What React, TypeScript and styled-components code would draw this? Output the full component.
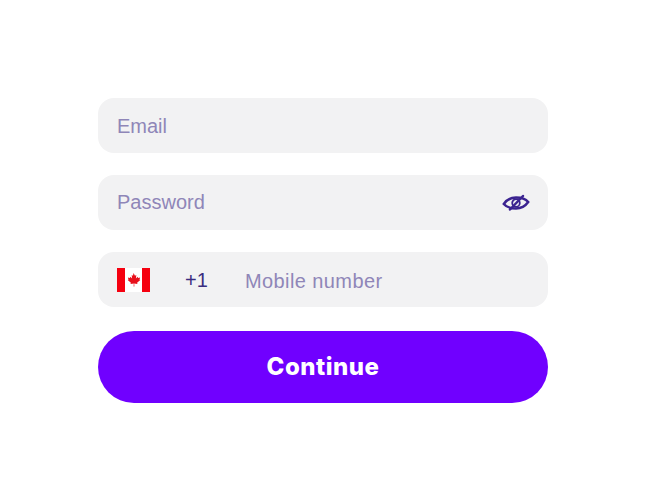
import React from "react";
import styled, { createGlobalStyle } from "styled-components";

const Global = createGlobalStyle`
  html, body { margin: 0; padding: 0; background: #fff; }
  body { font-family: "Liberation Sans", Arial, sans-serif; }
`;

const Page = styled.main`
  width: 648px;
  height: 500px;
  padding: 98px 100px 0 98px;
  box-sizing: border-box;
`;

const Form = styled.form`
  display: flex;
  flex-direction: column;
  width: 450px;
`;

const Field = styled.div<{ $gap?: number }>`
  display: flex;
  align-items: center;
  height: 55px;
  margin-bottom: ${(p) => p.$gap ?? 22}px;
  padding: 0 18px 0 19px;
  background: #f2f2f3;
  border-radius: 16px;
  box-sizing: border-box;
`;

const Input = styled.input<{ $spacing?: number; $drop?: number }>`
  flex: 1;
  min-width: 0;
  padding: ${(p) => p.$drop ?? 1}px 0 0;
  border: 0;
  outline: 0;
  background: transparent;
  font: 400 20px "Liberation Sans", Arial, sans-serif;
  letter-spacing: ${(p) => p.$spacing ?? 0}px;
  color: #2d1a78;
  &::placeholder { color: #8f86b8; opacity: 1; }
`;

const Dial = styled.span`
  width: 60px;
  margin-left: 35px;
  padding-top: 2px;
  font-size: 20px;
  color: #3a2d80;
`;

const FlagIcon = styled.svg`
  display: block;
  flex: none;
  width: 33px;
  height: 24px;
`;

const EyeIcon = styled.svg`
  display: block;
  flex: none;
  width: 28px;
  height: 20px;
`;

const Submit = styled.button`
  height: 72px;
  padding: 0 0 2px;
  border: 0;
  border-radius: 36px;
  background: #7000ff;
  color: #fff;
  font: 800 24px Inter, "Liberation Sans", sans-serif;
  letter-spacing: 0.5px;
  cursor: pointer;
`;

const Flag = () => (
  <FlagIcon viewBox="0 0 33 24" aria-label="Canada">
    <rect width="33" height="24" fill="#fff" />
    <rect width="8" height="24" fill="#f5000f" />
    <rect x="25" width="8" height="24" fill="#f5000f" />
    <path
      fill="#e8101c"
      d="M16.500 5l1.500 2.700 1.300-.6-.4 3.300 1.700-1.700.5 1.200 2-.3-.6 2.100.8.400-3.200 2.700.4 1.300-3.300-.5.200 2.900h-.8l.2-2.900-3.300.5.4-1.300-3.200-2.700.8-.4-.6-2.100 2 .3.5-1.200 1.700 1.700-.4-3.300 1.300.6z"
    />
  </FlagIcon>
);

const Eye = () => (
  <EyeIcon viewBox="0 0 28 20" fill="none" stroke="#3b2390" strokeWidth="2.500" strokeLinecap="round" aria-hidden="true">
    <path d="M1.800 11C5 6.500 9.500 4.500 14 4.500S23 5.200 26.200 9C23 13.500 18.500 15.500 14 15.500S5 14.800 1.800 11Z" />
    <circle cx="14" cy="10" r="3.800" strokeWidth="1.800" />
    <path d="M8 16.500L21 3" />
  </EyeIcon>
);

export default function App() {
  return (
    <>
      <Global />
      <Page>
        <Form onSubmit={(e) => e.preventDefault()}>
          <Field>
            <Input placeholder="Email" />
          </Field>
          <Field>
            <Input placeholder="Password" $drop={0} />
            <Eye />
          </Field>
          <Field $gap={24}>
            <Flag />
            <Dial>+1</Dial>
            <Input placeholder="Mobile number" $spacing={0.4} $drop={3} />
          </Field>
          <Submit type="submit">Continue</Submit>
        </Form>
      </Page>
    </>
  );
}
